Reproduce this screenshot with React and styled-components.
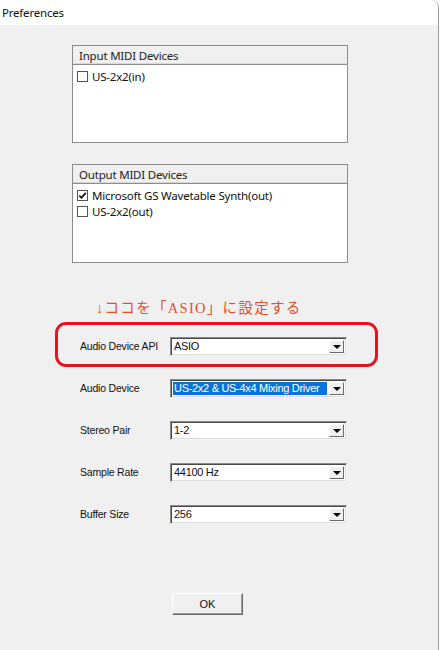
import React from "react";
import styled, { createGlobalStyle } from "styled-components";

const Global = createGlobalStyle`
  html, body { margin: 0; padding: 0; background: #ffffff; }
  body { width: 441px; height: 650px; overflow: hidden; }
`;

const Window = styled.div`
  width: 439px;
  height: 650px;
  box-sizing: border-box;
  background: #f0f0f0;
  border-right: 1px solid #9a9a9a;
  border-top-right-radius: 8px;
  border-top-left-radius: 8px;
  overflow: hidden;
  display: flex;
  flex-direction: column;
  font-family: "Liberation Sans", Arial, sans-serif;
`;

const TitleBar = styled.div`
  height: 25px;
  flex: none;
  background: #ffffff;
  display: flex;
  align-items: center;
  padding-left: 2px;
  font-family: "Noto Sans", "Open Sans", sans-serif;
  font-size: 11.5px;
  color: #111;
  letter-spacing: -0.2px;
  padding-bottom: 1px;
  box-sizing: border-box;
`;

const Body = styled.div`
  display: flex;
  flex-direction: column;
  padding-top: 20px;
`;

const ListBox = styled.div`
  margin-left: 72px;
  width: 276px;
  height: ${(p) => p.$h}px;
  margin-top: ${(p) => p.$mt || 0}px;
  box-sizing: border-box;
  border: 1px solid #8c8c8c;
  background: #ffffff;
  display: flex;
  flex-direction: column;
`;

const ListHeader = styled.div`
  height: 18px;
  flex: none;
  background: #f0f0f0;
  border-bottom: 1px solid #8c8c8c;
  box-shadow: inset 0 -1px 0 #d8d8d8;
  display: flex;
  align-items: center;
  padding-left: 6px;
  font-family: "Noto Sans", "Open Sans", sans-serif;
  font-size: 11.5px;
  color: #222;
  letter-spacing: -0.2px;
`;

const ListItems = styled.div`
  display: flex;
  flex-direction: column;
  padding: 3px 0 0 4px;
`;

const ListItem = styled.div`
  height: 16px;
  display: flex;
  align-items: center;
  gap: 4px;
  font-family: "Noto Sans", "Open Sans", sans-serif;
  font-size: 11.5px;
  color: #111;
  letter-spacing: -0.2px;
`;

const CheckBox = styled.span`
  width: 11px;
  height: 11px;
  box-sizing: border-box;
  border: 1px solid #555;
  background: #fff;
  display: inline-flex;
  align-items: center;
  justify-content: center;
  flex: none;
`;

const Note = styled.div`
  margin-top: 36px;
  margin-left: 96px;
  height: 18px;
  line-height: 18px;
  font-family: "Liberation Serif", "Noto Sans CJK JP", serif;
  font-size: 14.5px;
  letter-spacing: 1.3px;
  color: #e0502a;
`;

const Rows = styled.div`
  margin-top: 6px;
  margin-left: 55px;
  width: 323px;
  display: flex;
  flex-direction: column;
`;

const RowFrame = styled.div`
  box-sizing: border-box;
  height: ${(p) => (p.$highlight ? 45 : 42)}px;
  margin-top: ${(p) => (p.$highlight ? -1 : 0)}px;
  border: 3px solid ${(p) => (p.$highlight ? "#e3141e" : "transparent")};
  border-radius: 11px;
  padding-top: ${(p) => (p.$highlight ? 3 : 0)}px;
  display: flex;
  align-items: center;
  padding-left: 22px;
`;

const Label = styled.div`
  width: 90px;
  flex: none;
  font-size: 10.5px;
  color: #111;
  letter-spacing: -0.2px;
`;

const Combo = styled.div`
  width: 177px;
  height: 19px;
  box-sizing: border-box;
  background: #fff;
  border-top: 1px solid #8a8a8a;
  border-left: 1px solid #8a8a8a;
  border-right: 1px solid #f4f4f4;
  border-bottom: 1px solid #f4f4f4;
  box-shadow: inset 1px 1px 0 #4a4a4a, inset -1px -1px 0 #dcdcdc;
  display: flex;
  align-items: stretch;
  padding: 2px;
`;

const ComboValue = styled.div`
  flex: 1;
  display: flex;
  align-items: center;
  padding-left: 1px;
  margin-right: 2px;
  font-size: 11px;
  letter-spacing: -0.3px;
  color: ${(p) => (p.$selected ? "#ffffff" : "#111")};
  background: ${(p) => (p.$selected ? "#0a74d6" : "transparent")};
  white-space: nowrap;
  overflow: hidden;
`;

const DropButton = styled.div`
  width: 15px;
  flex: none;
  box-sizing: border-box;
  background: #efefef;
  border-top: 1px solid #fff;
  border-left: 1px solid #fff;
  border-right: 1px solid #6a6a6a;
  border-bottom: 1px solid #6a6a6a;
  display: flex;
  align-items: center;
  justify-content: center;
`;

const Arrow = styled.span`
  width: 0;
  height: 0;
  border-left: 4px solid transparent;
  border-right: 4px solid transparent;
  border-top: 4px solid #000;
  margin-top: 1px;
`;

const OkButton = styled.button`
  margin-top: 58px;
  margin-left: 172px;
  width: 71px;
  height: 22px;
  box-sizing: border-box;
  background: #f0f0f0;
  border-top: 1px solid #ffffff;
  border-left: 1px solid #ffffff;
  border-right: 1px solid #696969;
  border-bottom: 1px solid #696969;
  box-shadow: inset -1px -1px 0 #a0a0a0;
  font-family: "Liberation Sans", Arial, sans-serif;
  font-size: 11px;
  color: #111;
  padding: 0;
`;

const Check = () => (
  <svg width="9" height="9" viewBox="0 0 9 9">
    <path d="M1.3 4.6 L3.5 6.8 L7.8 1.8" fill="none" stroke="#111" strokeWidth="1.8" />
  </svg>
);

const rows = [
  { label: "Audio Device API", value: "ASIO", highlight: true },
  { label: "Audio Device", value: "US-2x2 & US-4x4 Mixing Driver", selected: true },
  { label: "Stereo Pair", value: "1-2" },
  { label: "Sample Rate", value: "44100 Hz" },
  { label: "Buffer Size", value: "256" },
];

export default function App() {
  return (
    <>
      <Global />
      <Window>
        <TitleBar>Preferences</TitleBar>
        <Body>
          <ListBox $h={98}>
            <ListHeader>Input MIDI Devices</ListHeader>
            <ListItems>
              <ListItem>
                <CheckBox />
                US-2x2(in)
              </ListItem>
            </ListItems>
          </ListBox>
          <ListBox $h={99} $mt={21}>
            <ListHeader>Output MIDI Devices</ListHeader>
            <ListItems>
              <ListItem>
                <CheckBox>
                  <Check />
                </CheckBox>
                Microsoft GS Wavetable Synth(out)
              </ListItem>
              <ListItem>
                <CheckBox />
                US-2x2(out)
              </ListItem>
            </ListItems>
          </ListBox>
          <Note>↓ココを「ASIO」に設定する</Note>
          <Rows>
            {rows.map((r) => (
              <RowFrame key={r.label} $highlight={r.highlight}>
                <Label>{r.label}</Label>
                <Combo>
                  <ComboValue $selected={r.selected}>{r.value}</ComboValue>
                  <DropButton>
                    <Arrow />
                  </DropButton>
                </Combo>
              </RowFrame>
            ))}
          </Rows>
          <OkButton>OK</OkButton>
        </Body>
      </Window>
    </>
  );
}
